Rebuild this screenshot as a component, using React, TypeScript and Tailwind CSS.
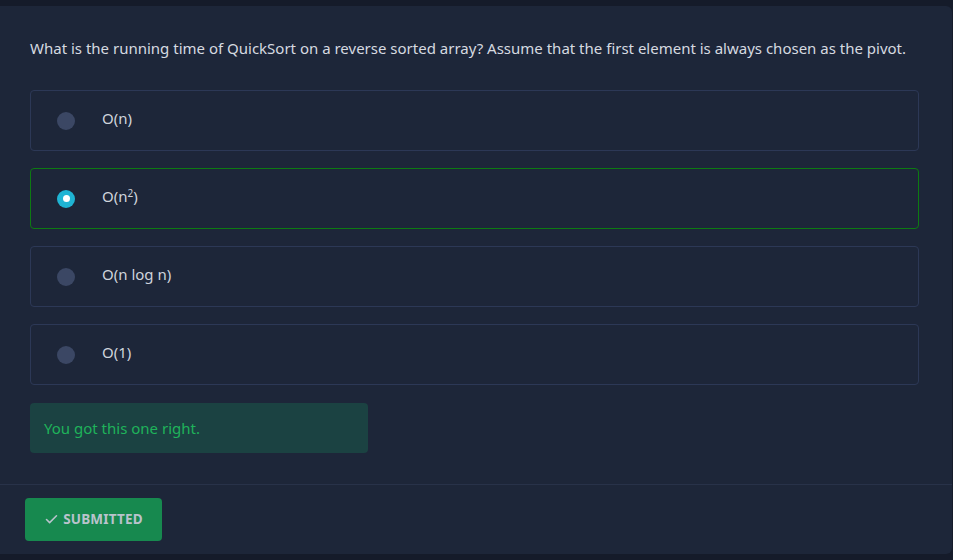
import { Check } from "lucide-react";

const options = [
  { id: "a", label: <>O(n)</>, selected: false },
  {
    id: "b",
    label: (
      <>
        O(n<sup className="text-[10px]">2</sup>)
      </>
    ),
    selected: true,
  },
  { id: "c", label: <>O(n log n)</>, selected: false },
  { id: "d", label: <>O(1)</>, selected: false },
];

export default function App() {
  return (
    <div className="h-[560px] w-[953px] bg-[#151b2a] py-[6px] font-['Noto_Sans',sans-serif]">
      <section className="flex h-full w-[952px] flex-col rounded-r-md bg-[#1d2639]">
        <div className="px-[30px] pt-[30px]">
          <p className="text-[15px] leading-6 text-[#d6dae0]">
            What is the running time of QuickSort on a reverse sorted array?
            Assume that the first element is always chosen as the pivot.
          </p>

          <div className="mt-[30px] flex w-[889px] flex-col gap-[17px]">
            {options.map((opt) => (
              <label
                key={opt.id}
                className={
                  "flex h-[61px] items-center rounded border pl-[26px] " +
                  (opt.selected ? "border-[#0d7a12]" : "border-[#2c3856]")
                }
              >
                {opt.selected ? (
                  <span className="flex h-[18px] w-[18px] items-center justify-center rounded-full bg-[#1fb4d4]">
                    <span className="h-[7px] w-[7px] rounded-full bg-white" />
                  </span>
                ) : (
                  <span className="h-[18px] w-[18px] rounded-full bg-[#3b4764]" />
                )}
                <span className="ml-[27px] pb-[4px] text-[15px] text-[#cfd4dc]">
                  {opt.label}
                </span>
              </label>
            ))}
          </div>

          <div className="mt-[18px] flex h-[50px] w-[338px] items-center rounded bg-[#1b4242] px-[14px] text-[15px] text-[#1fb35a]">
            You got this one right.
          </div>
        </div>

        <div className="mt-[31px] border-t border-[#283249] px-[25px] pt-[13px]">
          <button className="flex h-[43px] w-[137px] items-center justify-center gap-1 rounded bg-[#17894f] text-[13.5px] font-bold tracking-[0.2px] text-[#b9c3cc]">
            <Check size={15} strokeWidth={2.5} />
            SUBMITTED
          </button>
        </div>
      </section>
    </div>
  );
}
